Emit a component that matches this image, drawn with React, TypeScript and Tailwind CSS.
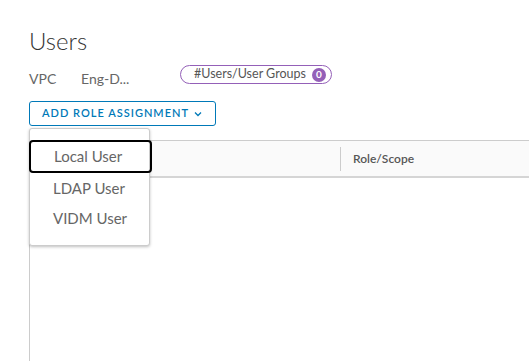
import React from 'react';

const font = { fontFamily: 'Lato, "Open Sans", sans-serif' };

const Chevron: React.FC = () => (
  <svg width="8" height="6" viewBox="0 0 8 6" className="ml-[5px]">
    <path d="M1 1.5 L4 4.5 L7 1.5" fill="none" stroke="#0079b8" strokeWidth="1.3" />
  </svg>
);

const App: React.FC = () => {
  return (
    <div className="h-[361px] w-[529px] overflow-hidden bg-white pl-[29px] pt-[27px]" style={font}>
      {/* Title */}
      <h1 className="text-[24px] font-light leading-[28px] text-[#333]">Users</h1>

      {/* Meta row */}
      <div className="mt-[10px] flex h-[19px] items-center text-[14px] text-[#666]">
        <span className="w-[52px] translate-y-[4px]">VPC</span>
        <span className="w-[99px] translate-y-[4px]">Eng-D...</span>
        <div className="flex h-[19px] w-[152px] items-center rounded-full border border-[#9460b8] pl-[13px] pr-[5px] text-[12.5px] text-[#565656]">
          <span>#Users/User Groups</span>
          <span className="ml-auto flex h-[14px] w-[14px] items-center justify-center rounded-full bg-[#9460b8] text-[10px] font-bold text-white">
            0
          </span>
        </div>
      </div>

      {/* Button + dropdown */}
      <div className="relative mt-[17px]">
        <button className="flex h-[25px] w-[187px] items-center rounded-[3px] border border-[#0079b8] pl-[12px] text-[11px] font-semibold tracking-[1px] text-[#0079b8]">
          ADD ROLE ASSIGNMENT
          <Chevron />
        </button>

        <div className="absolute left-0 top-[27px] z-10 w-[121px] rounded-[3px] border border-[#ccc] bg-white pb-[12px] pt-[11px] shadow-[0_1px_3px_rgba(0,0,0,0.25)]">
          <div className="-ml-[1px] flex h-[33px] w-[123px] items-center rounded-[4px] border-2 border-black pl-[23px] text-[15px] text-[#666]">
            Local User
          </div>
          <div className="flex h-[30px] items-center pl-[23px] text-[15px] text-[#666]">LDAP User</div>
          <div className="flex h-[30px] items-center pl-[23px] text-[15px] text-[#666]">VIDM User</div>
        </div>
      </div>

      {/* Table */}
      <div className="mt-[14px] h-[240px] w-[540px] border-l border-t border-[#ccc]">
        <div className="flex h-[37px] items-center border-b-2 border-[#d5d5d5] bg-[#fafafa]">
          <div className="h-full w-[310px]" />
          <div className="h-[24px] w-px bg-[#ccc]" />
          <div className="pl-[12px] text-[12px] font-semibold text-[#565656]">Role/Scope</div>
        </div>
      </div>
    </div>
  );
};

export default App;
